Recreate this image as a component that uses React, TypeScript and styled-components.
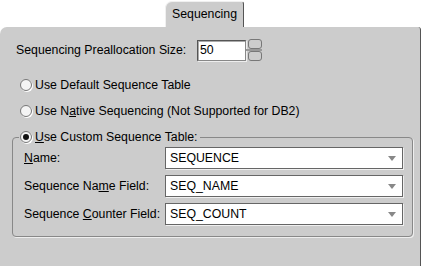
import styled, { createGlobalStyle } from 'styled-components';

const GlobalStyle = createGlobalStyle`
  html, body {
    margin: 0;
    padding: 0;
    background: #ffffff;
  }
  body {
    font-family: "Liberation Sans", Arial, sans-serif;
    font-size: 12.3px;
    color: #000;
  }
`;

const Frame = styled.div`
  width: 422px;
  height: 266px;
  display: flex;
  flex-direction: column;
  overflow: hidden;
`;

const TabStrip = styled.div`
  display: flex;
  height: 27px;
  padding-left: 165px;
  align-items: flex-end;
`;

const Tab = styled.div`
  width: 77px;
  height: 24px;
  background: #cccccc;
  border-top: 1px solid #f0f0f0;
  border-left: 1px solid #f0f0f0;
  border-right: 1px solid #555;
  border-radius: 7px 3px 0 0;
  display: flex;
  align-items: center;
  justify-content: center;
  padding-bottom: 1px;
`;

const Panel = styled.div`
  flex: 1;
  width: 420px;
  background: #cccccc;
  border-right: 1px solid #555;
  border-radius: 7px 3px 0 0;
  padding: 12px 0 0 0;
  display: flex;
  flex-direction: column;
`;

const SizeRow = styled.div`
  display: flex;
  align-items: center;
  height: 22px;
  padding-left: 16px;
`;

const SizeLabel = styled.span`
  width: 181px;
`;

const NumberField = styled.div`
  width: 45px;
  height: 19px;
  background: #fff;
  border: 1px solid #888;
  border-top-color: #555;
  border-left-color: #555;
  box-shadow: inset 1px 1px 0 #aaa, 1px 1px 0 #eee;
  display: flex;
  align-items: center;
  padding-left: 2px;
`;

const Spinner = styled.div`
  margin-left: 2px;
  display: flex;
  flex-direction: column;
  justify-content: space-between;
  height: 22px;
  position: relative;
`;

const SpinButton = styled.div`
  width: 12px;
  height: 8px;
  background: #cccccc;
  border: 1px solid #777;
  border-radius: 3px;
`;

const SpinBar = styled.div`
  position: absolute;
  left: -2px;
  right: 0;
  top: 10px;
  height: 2px;
  background: #999;
`;

const RadioList = styled.div`
  display: flex;
  flex-direction: column;
  padding-left: 20px;
  margin-top: 16px;
  gap: 10px;
`;

const RadioRow = styled.label`
  display: flex;
  align-items: center;
  height: 16px;
  gap: 3px;
`;

const RadioDot = styled.span<{ $checked?: boolean }>`
  width: 10px;
  height: 10px;
  border-radius: 50%;
  background: #f4f4f4;
  border: 1px solid #777;
  box-shadow: 1px 1px 0 #fff;
  position: relative;
  flex: none;
  &::after {
    content: '';
    display: ${(p) => (p.$checked ? 'block' : 'none')};
    position: absolute;
    left: 2px;
    top: 2px;
    width: 6px;
    height: 6px;
    border-radius: 50%;
    background: #111;
  }
`;

const U = styled.span`
  text-decoration: underline;
  text-underline-offset: 1px;
`;

const Group = styled.fieldset`
  margin: 10px 7px 0 12px;
  padding: 2px 10px 11px 11px;
  border: 1px solid #888;
  border-radius: 4px;
  box-shadow: 1px 1px 0 #eee;
  display: flex;
  flex-direction: column;
  gap: 6px;
  min-width: 0;
`;

const Legend = styled.legend`
  padding: 0 3px 0 1px;
  margin-left: -5px;
  display: flex;
  align-items: center;
  gap: 3px;
  height: 16px;
`;

const FieldRow = styled.div`
  display: flex;
  align-items: center;
  height: 22px;
`;

const FieldLabel = styled.span`
  width: 141px;
  flex: none;
`;

const Combo = styled.div`
  width: 226px;
  height: 18px;
  flex: none;
  background: #fff;
  border: 1px solid #666;
  box-shadow: inset 1px 1px 0 #ddd, 1px 1px 0 #f0f0f0;
  outline: 1px solid #fff;
  outline-offset: -2px;
  display: flex;
  align-items: center;
  justify-content: space-between;
  padding: 1px 6px 1px 4px;
`;

const Arrow = styled.span`
  width: 0;
  height: 0;
  border-left: 4px solid transparent;
  border-right: 4px solid transparent;
  border-top: 5px solid #888;
`;

const fields = [
  { label: <><U>N</U>ame:</>, value: 'SEQUENCE' },
  { label: <>Sequence Na<U>m</U>e Field:</>, value: 'SEQ_NAME' },
  { label: <>Sequence <U>C</U>ounter Field:</>, value: 'SEQ_COUNT' },
];

export default function App() {
  return (
    <>
      <GlobalStyle />
      <Frame>
        <TabStrip>
          <Tab>Sequencing</Tab>
        </TabStrip>
        <Panel>
          <SizeRow>
            <SizeLabel>Sequencing Preallocation Size:</SizeLabel>
            <NumberField>50</NumberField>
            <Spinner>
              <SpinBar />
              <SpinButton />
              <SpinButton />
            </Spinner>
          </SizeRow>
          <RadioList>
            <RadioRow>
              <RadioDot />
              Use Default Sequence Table
            </RadioRow>
            <RadioRow>
              <RadioDot />
              <span>Use N<U>a</U>tive Sequencing (Not Supported for DB2)</span>
            </RadioRow>
          </RadioList>
          <Group>
            <Legend>
              <RadioDot $checked />
              <span><U>U</U>se Custom Sequence Table:</span>
            </Legend>
            {fields.map((f) => (
              <FieldRow key={f.value}>
                <FieldLabel>{f.label}</FieldLabel>
                <Combo>
                  {f.value}
                  <Arrow />
                </Combo>
              </FieldRow>
            ))}
          </Group>
        </Panel>
      </Frame>
    </>
  );
}
